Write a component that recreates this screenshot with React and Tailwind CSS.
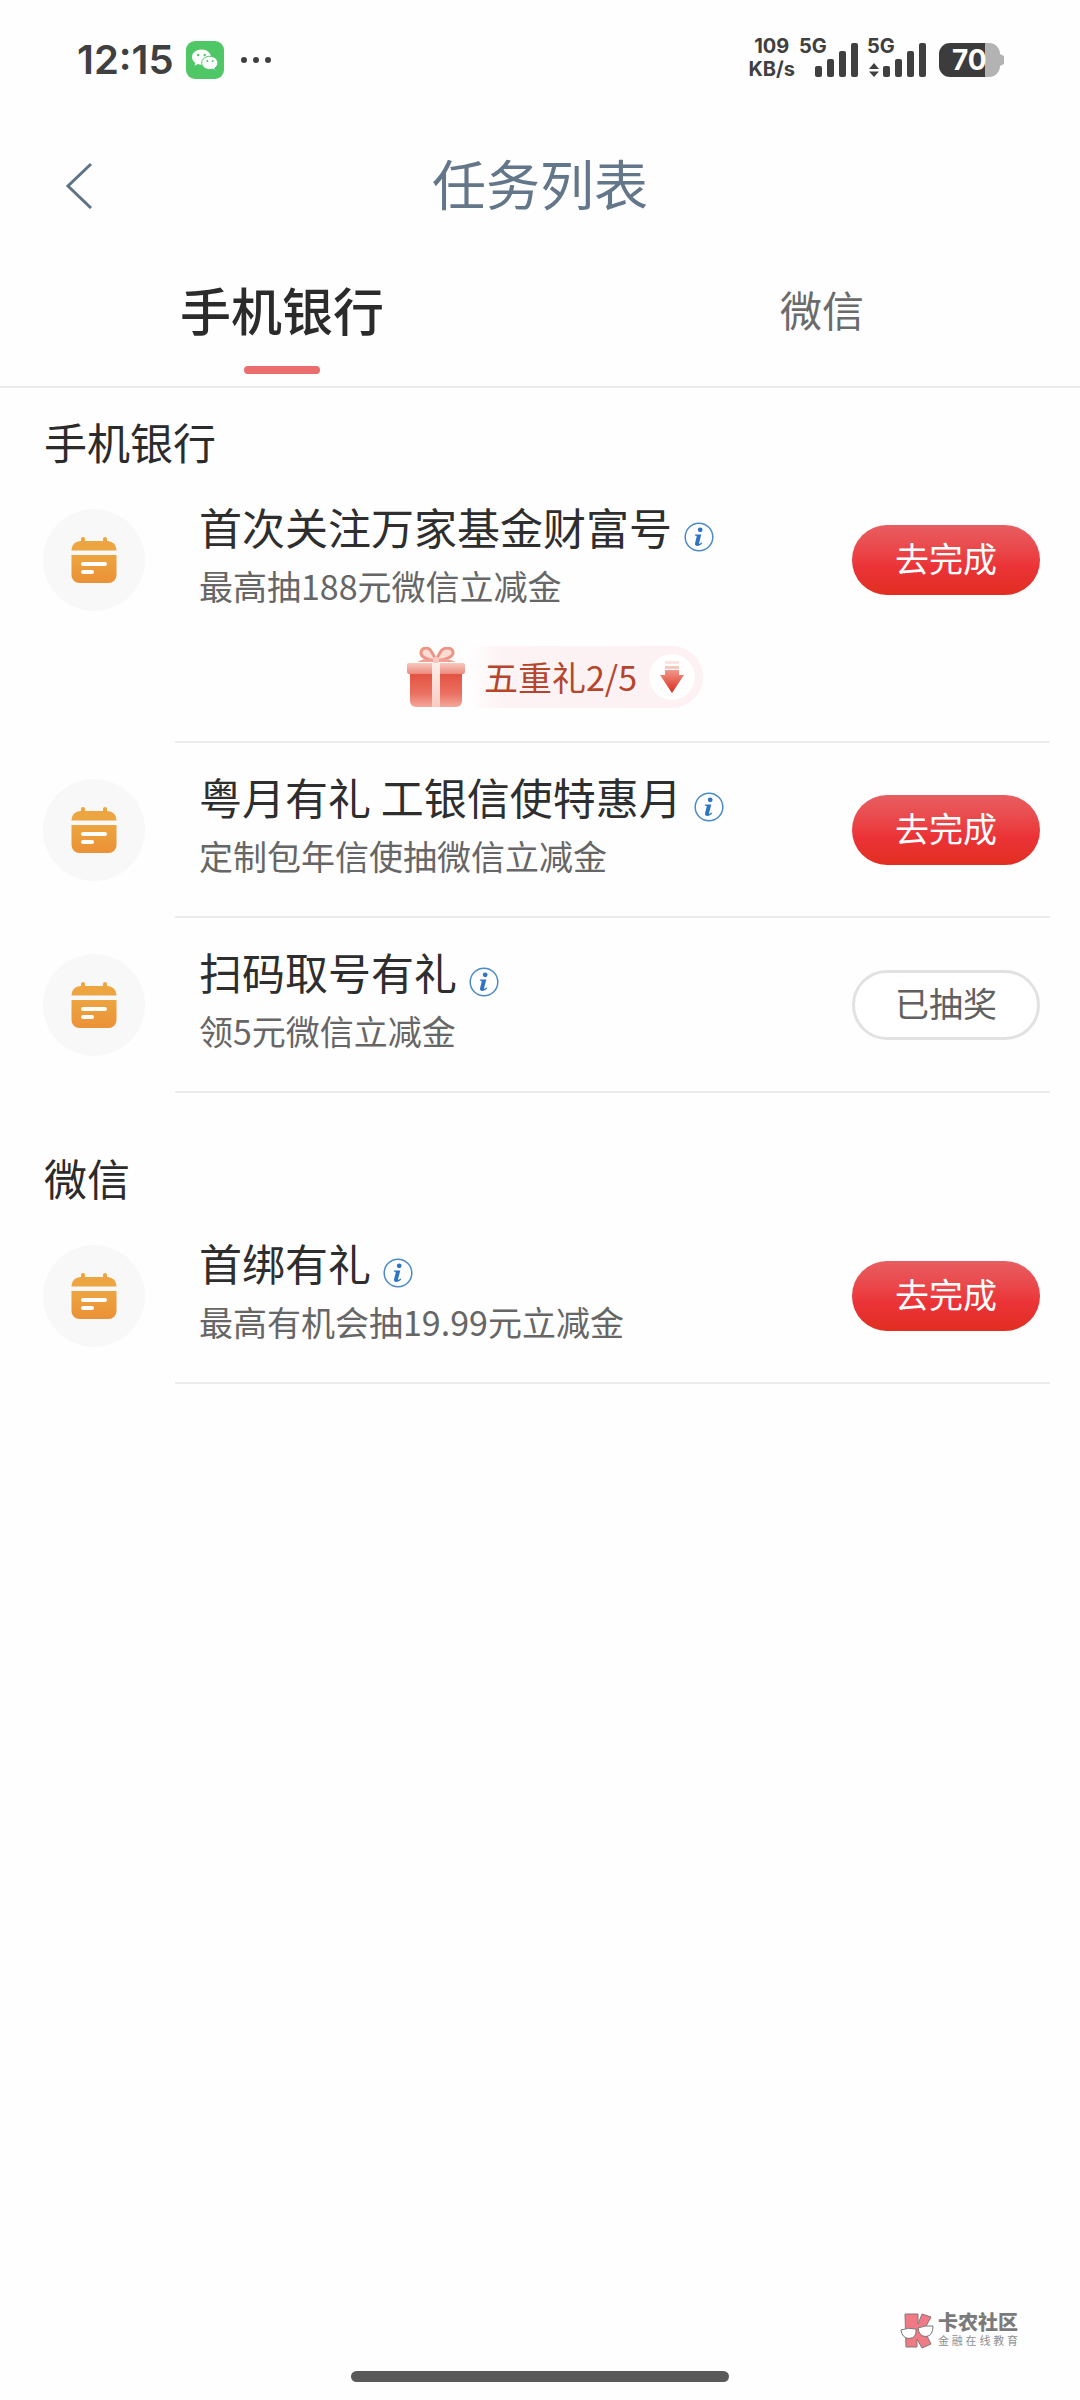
import { useState } from "react";

const TABS = [
  { id: "bank", label: "手机银行" },
  { id: "wechat", label: "微信" },
];

const SECTIONS = [
  {
    title: "手机银行",
    spacing: "pt-[25px]",
    tasks: [
      {
        id: 1,
        title: "首次关注万家基金财富号",
        desc: "最高抽188元微信立减金",
        gift: "五重礼2/5",
      },
      { id: 2, title: "粤月有礼 工银信使特惠月", desc: "定制包年信使抽微信立减金" },
      { id: 3, title: "扫码取号有礼", desc: "领5元微信立减金", done: true },
    ],
  },
  {
    title: "微信",
    spacing: "pt-14",
    tasks: [{ id: 4, title: "首绑有礼", desc: "最高有机会抽19.99元立减金" }],
  },
];

function WeChatIcon() {
  return (
    <svg viewBox="0 0 38 38" className="size-[38px]" aria-hidden="true">
      <rect width="38" height="38" rx="9" fill="#4fc767" />
      <path
        d="M15.500 8.500c-5.300 0-9.500 3.300-9.500 7.600 0 2.400 1.300 4.500 3.400 5.900l-.8 2.800 3.300-1.700c1.100.4 2.300.6 3.600.6 5.300 0 9.500-3.400 9.500-7.600s-4.200-7.600-9.500-7.600z"
        fill="#fff"
      />
      <path
        d="M23.800 15.300c-4.500 0-8.100 2.900-8.100 6.600s3.600 6.600 8.100 6.600c1 0 2-.2 2.900-.4l2.800 1.400-.7-2.400c1.800-1.200 3-3.100 3-5.200 0-3.700-3.600-6.600-8-6.600z"
        fill="#fff"
        stroke="#4fc767"
        strokeWidth="1"
      />
      <g fill="#4fc767">
        <circle cx="12.200" cy="14" r="1.200" />
        <circle cx="18.700" cy="14" r="1.200" />
        <circle cx="21.300" cy="20" r="1" />
        <circle cx="26.700" cy="20" r="1" />
      </g>
    </svg>
  );
}

function Signal({ arrows }) {
  return (
    <div className="relative h-[38px] w-[60px]">
      <span className="absolute left-0 top-0 text-[20px] leading-[15px] font-bold">5G</span>
      <svg viewBox="0 0 60 38" className="h-[38px] w-[60px]" fill="#404040" aria-hidden="true">
        {arrows && <path d="M7 24l5 6H2zM7 38l5-5.500H2z" />}
        <rect x="16" y="27" width="7" height="11" rx="2" />
        <rect x="28" y="20" width="7" height="18" rx="2" />
        <rect x="40" y="12" width="7" height="26" rx="2" />
        <rect x="52" y="4" width="7" height="34" rx="2" />
      </svg>
    </div>
  );
}

function Battery() {
  return (
    <div className="relative mt-1 h-[34px] w-[65px]">
      <svg viewBox="0 0 65 34" className="h-[34px] w-[65px]" aria-hidden="true">
        <path d="M46 0h4a11 11 0 0 1 11 11l4 2v8l-4 2a11 11 0 0 1-11 11h-4z" fill="#b3b3b3" />
        <path d="M11 0h35v34H11A11 11 0 0 1 0 23V11A11 11 0 0 1 11 0z" fill="#3c3c3c" />
      </svg>
      <span className="absolute left-[13px] top-0 text-[28px] leading-[34px] font-bold text-white">70</span>
    </div>
  );
}

function StatusBar() {
  return (
    <div className="flex items-start justify-between pt-[39px] pl-[77px] pr-[76px] font-['Inter',sans-serif] text-[#404040]">
      <div className="flex items-center">
        <span className="text-[40px] leading-[42px] font-semibold">12:15</span>
        <span className="ml-3">
          <WeChatIcon />
        </span>
        <svg viewBox="0 0 32 8" className="ml-4 h-2 w-8" fill="#404040" aria-hidden="true">
          <circle cx="4" cy="4" r="3" />
          <circle cx="16" cy="4" r="3" />
          <circle cx="28" cy="4" r="3" />
        </svg>
      </div>
      <div className="flex items-start">
        <div className="mr-1 flex flex-col items-center gap-2 text-[20px] leading-[15px] font-bold">
          <span>109</span>
          <span>KB/s</span>
        </div>
        <Signal />
        <span className="ml-2">
          <Signal arrows />
        </span>
        <span className="ml-3">
          <Battery />
        </span>
      </div>
    </div>
  );
}

function CalendarIcon() {
  return (
    <span className="flex size-[102px] items-center justify-center rounded-full bg-[#f8f8f8]">
      <svg viewBox="0 0 46 46" className="size-[46px]" aria-hidden="true">
        <defs>
          <linearGradient id="calendar" x1="0" y1="0" x2="0" y2="1">
            <stop offset="0" stopColor="#eca540" />
            <stop offset="1" stopColor="#eb9137" />
          </linearGradient>
        </defs>
        <path
          d="M10 4V2a2 2 0 0 1 4 0v2h18V2a2 2 0 0 1 4 0v2a9 9 0 0 1 9.500 9.500H.5A9 9 0 0 1 10 4z"
          fill="#eca540"
        />
        <path d="M.5 18h45v20a8 8 0 0 1-8 8h-29a8 8 0 0 1-8-8z" fill="url(#calendar)" />
        <rect x="10" y="25" width="26" height="4" rx="2" fill="#fff" />
        <rect x="10" y="33" width="13" height="4" rx="2" fill="#fff" />
      </svg>
    </span>
  );
}

function InfoIcon() {
  return (
    <svg viewBox="0 0 30 30" className="size-[30px]" aria-hidden="true">
      <circle cx="15" cy="15" r="13.800" fill="#fff" stroke="#4a8ac9" strokeWidth="1.500" />
      <circle cx="16.200" cy="7.800" r="2.400" fill="#2f74c4" />
      <path
        d="M11 12.500h6.300l-2.200 8.600c-.2.900.3 1 1 .5l1.600-1.100.6.800c-1.700 1.700-3.300 2.600-5 2.600-2 0-2.600-1.100-2.200-2.900l1.500-6c.2-.8 0-1.100-.7-1.200l-1.100-.2z"
        fill="#2f74c4"
      />
    </svg>
  );
}

function GiftIcon() {
  return (
    <svg viewBox="0 0 60 60" className="size-[60px]" aria-hidden="true">
      <defs>
        <linearGradient id="giftBox" x1="0" y1="0" x2="0" y2="1">
          <stop offset="0" stopColor="#e2503f" />
          <stop offset=".6" stopColor="#ea6f60" />
          <stop offset="1" stopColor="#f3a79a" />
        </linearGradient>
        <linearGradient id="giftLid" x1="0" y1="0" x2="0" y2="1">
          <stop offset="0" stopColor="#f8c8bf" />
          <stop offset="1" stopColor="#ec8a7b" />
        </linearGradient>
        <linearGradient id="giftRibbon" x1="0" y1="0" x2="0" y2="1">
          <stop offset="0" stopColor="#fdeeea" />
          <stop offset="1" stopColor="#f8cdc4" />
        </linearGradient>
      </defs>
      <path d="M4 25h52v29a6 6 0 0 1-6 6H10a6 6 0 0 1-6-6z" fill="url(#giftBox)" />
      <rect x="1" y="16" width="58" height="11" rx="2" fill="url(#giftLid)" />
      <rect x="26" y="16" width="8" height="44" fill="url(#giftRibbon)" />
      <path
        d="M30 14C22 13 14 10 15 5c1-5 8-5 10-1 2 3 4 7 5 10zM30 14c8-1 18-4 17-9-1-5-9-5-12-1-2 3-4 7-5 10z"
        fill="#fbdcd5"
        stroke="#ee9485"
        strokeWidth="3"
      />
      <path d="M28 12c-7-1-12 0-17 3h17zM32 12c7-1 12 0 18 3H32z" fill="#f0a194" />
      <rect x="27" y="10" width="6" height="6" rx="2" fill="#f8c9c0" />
    </svg>
  );
}

function DownArrow() {
  return (
    <span className="flex size-[46px] items-center justify-center rounded-full bg-white">
      <svg viewBox="0 0 24 32" className="h-8 w-6" aria-hidden="true">
        <defs>
          <linearGradient id="arrow" x1="0" y1="0" x2="0" y2="1">
            <stop offset="0" stopColor="#f0988a" />
            <stop offset="1" stopColor="#d92b1c" />
          </linearGradient>
        </defs>
        <rect x="5" y="0" width="14" height="3" fill="#fbe3df" />
        <rect x="5" y="5" width="14" height="3" fill="#f7c8c0" />
        <path d="M5 9h14v5h5L12 32 0 14h5z" fill="url(#arrow)" />
      </svg>
    </span>
  );
}

function GiftBadge({ text }) {
  return (
    <button type="button" className="flex items-center">
      <GiftIcon />
      <span className="flex h-[62px] items-center gap-3 rounded-r-full bg-gradient-to-r from-white via-[#fdf3f4] via-15% to-[#fdf1f3] pl-[18px] pr-2 text-[34px] leading-[48px] text-[#b5452b]">
        {text}
        <DownArrow />
      </span>
    </button>
  );
}

function TaskItem({ task }) {
  return (
    <li className="flex">
      <div className="w-[175px] shrink-0 pt-9 pl-[43px]">
        <CalendarIcon />
      </div>
      <div className="mr-[30px] min-w-0 flex-1 border-b-2 border-[#ececec] pt-9">
        <div className="flex h-[102px] items-center justify-between pl-6 pr-[10px]">
          <div className="pb-3">
            <div className="flex items-center">
              <h3 className="text-[43px] leading-[64px] text-[#2e2e2e]">{task.title}</h3>
              <button type="button" aria-label="活动说明" className="mt-[22px] ml-3">
                <InfoIcon />
              </button>
            </div>
            <p className="text-[34px] leading-[56px] text-[#666]">{task.desc}</p>
          </div>
          {task.done ? (
            <button
              type="button"
              className="h-[70px] w-[188px] shrink-0 rounded-full border-3 border-[#e2e2e2] bg-white pb-1 text-[34px] leading-[48px] text-[#606060]"
            >
              已抽奖
            </button>
          ) : (
            <button
              type="button"
              className="h-[70px] w-[188px] shrink-0 rounded-full bg-gradient-to-b from-[#e85d61] via-[#eb3337] via-60% to-[#e22e20] pb-1 text-[34px] leading-[48px] text-white"
            >
              去完成
            </button>
          )}
        </div>
        {task.gift ? (
          <div className="flex justify-center pt-[35px] pr-29 pb-[33px]">
            <GiftBadge text={task.gift} />
          </div>
        ) : (
          <div className="h-[35px]" />
        )}
      </div>
    </li>
  );
}

function Watermark() {
  return (
    <div className="flex items-center gap-1 font-['Liberation_Sans','Noto_Sans_CJK_SC',sans-serif]">
      <svg viewBox="0 0 34 36" className="h-9 w-[34px]" aria-hidden="true">
        <path
          d="M5 1h13v10l4-10 9 3-7 13 7 14-9 4-5-9v8H6z"
          fill="#f07a85"
          stroke="#857679"
          strokeWidth="1"
        />
        <path d="M1 17q7-3 15-1 1 9-7 9.500Q2 25 1 17z" fill="#fff" stroke="#777" strokeWidth="1" />
        <path d="M18 15q7-3 15-2 0 10-7 10.500-7 0-8-8.500z" fill="#fff" stroke="#777" strokeWidth="1" />
      </svg>
      <div className="flex flex-col">
        <span className="text-[20px] leading-[21px] font-black text-[#7b7b7b]">卡农社区</span>
        <span className="flex justify-between text-[11px] leading-[15px] text-[#8f8f8f]">
          {[..."金融在线教育"].map((ch) => (
            <span key={ch}>{ch}</span>
          ))}
        </span>
      </div>
    </div>
  );
}

export default function App() {
  const [tab, setTab] = useState("bank");

  return (
    <div className="flex min-h-screen flex-col overflow-x-hidden bg-[#fefefe] font-['Noto_Sans_CJK_SC',sans-serif]">
      <StatusBar />

      {/* Header */}
      <header className="mt-16 grid grid-cols-[1fr_auto_1fr] items-center px-16">
        <button type="button" aria-label="返回" className="justify-self-start">
          <svg viewBox="0 0 30 48" className="h-12 w-[30px]" fill="none" stroke="#5f7386" strokeWidth="3" aria-hidden="true">
            <path d="M27 3L4 25l23 22" />
          </svg>
        </button>
        <h1 className="pb-1 text-[54px] leading-[76px] text-[#647689]">任务列表</h1>
      </header>

      {/* Tabs */}
      <div className="mt-[42px] border-b-2 border-[#ebebeb]">
        <nav className="-mr-3 flex pl-3">
          {TABS.map((t) => (
            <button
              key={t.id}
              type="button"
              onClick={() => setTab(t.id)}
              className="flex flex-1 flex-col items-center pb-3"
            >
              <span
                className={
                  tab === t.id
                    ? "text-[51px] leading-[84px] font-medium text-[#2b2b2b]"
                    : "text-[42px] leading-[84px] text-[#6b6b6b]"
                }
              >
                {t.label}
              </span>
              {tab === t.id && <span className="mt-[15px] h-2 w-[76px] rounded-full bg-[#ea6e6e]" />}
            </button>
          ))}
        </nav>
      </div>

      {/* Task list */}
      <main>
        {SECTIONS.map((section) => (
          <section key={section.title} className={section.spacing}>
            <h2 className="mb-1 pl-[44px] text-[43px] leading-[56px] text-[#2b2b2b]">{section.title}</h2>
            <ul>
              {section.tasks.map((task) => (
                <TaskItem key={task.id} task={task} />
              ))}
            </ul>
          </section>
        ))}
      </main>

      <footer className="mt-auto flex flex-col pb-[18px]">
        <div className="self-end pr-[62px]">
          <Watermark />
        </div>
        <div className="mt-[22px] h-[11px] w-[378px] self-center rounded-full bg-[#5a5a5a]" />
      </footer>
    </div>
  );
}
